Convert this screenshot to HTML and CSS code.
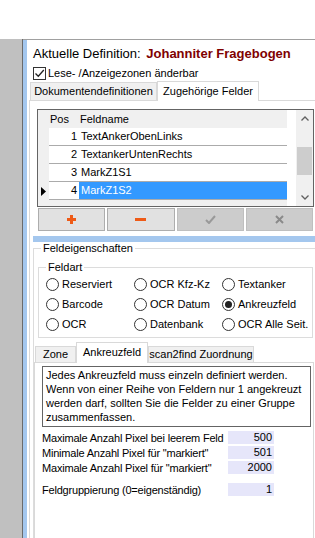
FILE: index.html
```html
<!DOCTYPE html>
<html lang="de">
<head>
    <meta charset="UTF-8">
    <title>Felddefinitionen</title>
    <link rel="stylesheet" href="styles.css">
</head>
<body>

    <div class="topspace"></div>

    <div class="frame">
        <div class="side"></div>
        <div class="stripe"></div>

        <div class="main">
            <div class="title">Aktuelle Definition: <b>Johanniter Fragebogen</b></div>

            <label class="check">
                <span class="box"><svg width="11" height="11" viewBox="0 0 11 11"><path d="M1.5 5.5l2.8 2.8 5.5-6.3" stroke="#222" stroke-width="1.3" fill="none"/></svg></span>
                Lese- /Anzeigezonen änderbar
            </label>

            <div class="tabs outer">
                <div class="tabstrip">
                    <div class="tab t-dok">Dokumentendefinitionen</div>
                    <div class="tab active t-felder">Zugehörige Felder</div>
                </div>
                <div class="tabpage">

                    <div class="grid">
                        <div class="table">
                            <div class="row head">
                                <div></div><div class="pos">Pos</div><div class="name">Feldname</div>
                            </div>
                            <div class="row">
                                <div class="ind"></div><div class="cell num">1</div><div class="cell">TextAnkerObenLinks</div>
                            </div>
                            <div class="row">
                                <div class="ind"></div><div class="cell num">2</div><div class="cell">TextankerUntenRechts</div>
                            </div>
                            <div class="row">
                                <div class="ind"></div><div class="cell num">3</div><div class="cell">MarkZ1S1</div>
                            </div>
                            <div class="row">
                                <div class="ind"><svg width="5" height="9" viewBox="0 0 5 9"><path d="M0 0l5 4.5L0 9z" fill="#000"/></svg></div>
                                <div class="cell num">4</div><div class="cell selected">MarkZ1S2</div>
                            </div>
                        </div>
                        <div class="gap"></div>
                        <div class="scroll">
                            <div class="arrow"><svg width="8" height="5" viewBox="0 0 8 5"><path d="M0.5 4.5L4 1l3.5 3.5" stroke="#606060" stroke-width="1.3" fill="none"/></svg></div>
                            <div class="track"><div class="thumb"></div></div>
                            <div class="arrow"><svg width="8" height="5" viewBox="0 0 8 5"><path d="M0.5 0.5L4 4l3.5-3.5" stroke="#606060" stroke-width="1.3" fill="none"/></svg></div>
                        </div>
                    </div>

                    <div class="buttons">
                        <div class="btn"><svg width="9" height="9" viewBox="0 0 9 9"><path d="M3 0h3v3h3v3H6v3H3V6H0V3h3z" fill="#ee5a16"/></svg></div>
                        <div class="btn"><svg width="11" height="3" viewBox="0 0 11 3"><rect width="11" height="3" fill="#ee5a16"/></svg></div>
                        <div class="btn off"><svg width="11" height="9" viewBox="0 0 11 9"><path d="M1 5l3 3 6-7" stroke="#999" stroke-width="2" fill="none"/></svg></div>
                        <div class="btn off"><svg width="9" height="9" viewBox="0 0 9 9"><path d="M1 1l7 7M8 1L1 8" stroke="#8a8a8a" stroke-width="2"/></svg></div>
                    </div>

                    <div class="bluebar"></div>

                    <fieldset class="group props">
                        <legend>Feldeigenschaften</legend>

                        <fieldset class="group feldart">
                            <legend>Feldart</legend>
                            <div class="radios">
                                <label class="radio"><span class="dot"></span>Reserviert</label>
                                <label class="radio"><span class="dot"></span>OCR Kfz-Kz</label>
                                <label class="radio"><span class="dot"></span>Textanker</label>
                                <label class="radio"><span class="dot"></span>Barcode</label>
                                <label class="radio"><span class="dot"></span>OCR Datum</label>
                                <label class="radio"><span class="dot on"></span>Ankreuzfeld</label>
                                <label class="radio"><span class="dot"></span>OCR</label>
                                <label class="radio"><span class="dot"></span>Datenbank</label>
                                <label class="radio"><span class="dot"></span>OCR Alle Seit.</label>
                            </div>
                        </fieldset>

                        <div class="tabs inner">
                            <div class="tabstrip">
                                <div class="tab t-zone">Zone</div>
                                <div class="tab active t-ank">Ankreuzfeld</div>
                                <div class="tab t-scan">scan2find Zuordnung</div>
                            </div>
                            <div class="tabpage">
                                <div class="info">
                                    Jedes Ankreuzfeld muss einzeln definiert werden.<br>
                                    Wenn von einer Reihe von Feldern nur 1 angekreuzt<br>
                                    werden darf, sollten Sie die Felder zu einer Gruppe<br>
                                    zusammenfassen.
                                </div>

                                <div class="fields">
                                    <div class="field"><span>Maximale Anzahl Pixel bei leerem Feld</span><span class="val">500</span></div>
                                    <div class="field"><span>Minimale Anzahl Pixel für "markiert"</span><span class="val">501</span></div>
                                    <div class="field"><span>Maximale Anzahl Pixel für "markiert"</span><span class="val">2000</span></div>
                                    <div class="field sep"><span>Feldgruppierung (0=eigenständig)</span><span class="val">1</span></div>
                                </div>
                            </div>
                        </div>
                    </fieldset>

                </div>
            </div>
        </div>
    </div>

</body>
</html>
```

FILE: styles.css
```css
/* Fenster im Stil eines Windows-Formulars */
html, body {
    margin: 0;
    padding: 0;
}

body {
    width: 315px;
    height: 538px;
    overflow: hidden;
    background: #fff;
    font-family: "Liberation Sans", Arial, sans-serif;
    font-size: 11px;
    line-height: 14px;
    color: #000;
}

.topspace {
    height: 39px;
}

.frame {
    display: flex;
    height: 499px;
}

.side {
    width: 22px;
    background: #c0c0c0;
    border-right: 1px solid #6b6b6b;
}

.stripe {
    width: 4px;
    background: #a4c7ee;
    border-top: 1px solid #a0a0a0;
}

.main {
    flex: 1;
    min-width: 0;
    overflow: hidden;
    border-top: 1px solid #a0a0a0;
}

.title {
    margin: 6px 0 0 6px;
    font-size: 13px;
    line-height: 16px;
    white-space: nowrap;
}

.title b {
    color: #800000;
    margin-left: 2px;
}

.check {
    display: flex;
    align-items: center;
    height: 14px;
    margin: 4px 0 0 6px;
    white-space: nowrap;
}

.box {
    width: 11px;
    height: 11px;
    border: 1px solid #333;
    background: #fff;
    margin-right: 2px;
    display: flex;
}

/* Registerkarten */
.tabstrip {
    display: flex;
    align-items: flex-end;
    padding-left: 1px;
}

.tab {
    box-sizing: border-box;
    border: 1px solid #d9d9d9;
    border-bottom: none;
    background: #f0f0f0;
    font-size: 11px;
    text-align: center;
    white-space: nowrap;
}

.tab.active {
    background: #fff;
    margin-bottom: -1px;
    position: relative;
}

.tabpage {
    border: 1px solid #d9d9d9;
    background: #fff;
}

.outer {
    width: 300px;
    margin: 1px 0 0 2px;
}

.outer .tabstrip { height: 19px; }
.outer .tab { height: 18px; line-height: 16px; }
.outer .tab.active { height: 20px; line-height: 18px; }
.t-dok { width: 127px; }
.t-felder { width: 102px; }

.outer > .tabpage { height: 460px; }

/* Tabelle */
.grid {
    display: flex;
    width: 275px;
    height: 96px;
    margin: 8px 0 0 7px;
    border: 1px solid #646464;
}

.table {
    width: 249px;
    background: #f0f0f0;
}

.row {
    display: grid;
    grid-template-columns: 11px 30px 208px;
    height: 18px;
}

.row.head div {
    line-height: 18px;
}

.pos { padding-left: 1px; }
.name { padding-left: 1px; }

.ind {
    display: flex;
    align-items: center;
    justify-content: center;
}

.cell {
    background: #fff;
    border-bottom: 1px solid #ababab;
    line-height: 17px;
    padding-left: 2px;
    white-space: nowrap;
}

.cell.num {
    text-align: right;
    padding: 0 2px 0 0;
}

.cell.selected {
    background: #3399ff;
    color: #fff;
}

.gap {
    width: 9px;
    background: #fff;
}

.scroll {
    width: 17px;
    display: flex;
    flex-direction: column;
    background: #f0f0f0;
}

.arrow {
    height: 17px;
    display: flex;
    align-items: center;
    justify-content: center;
}

.track { flex: 1; }

.thumb {
    height: 28px;
    margin: 20px 1px 0;
    background: #cdcdcd;
}

/* Schaltflaechen */
.buttons {
    display: flex;
    gap: 2px;
    width: 275px;
    margin: 1px 0 0 8px;
}

.btn {
    flex: 1;
    height: 23px;
    box-sizing: border-box;
    border: 1px solid #adadad;
    background: #e1e1e1;
    display: flex;
    align-items: center;
    justify-content: center;
}

.btn.off {
    background: #cccccc;
    border-color: #bfbfbf;
}

.bluebar {
    height: 6px;
    margin: 5px 0 0 3px;
    background: #a4c7ee;
}

/* Gruppen */
.group {
    border: 1px solid #dcdcdc;
    padding: 0;
    margin: 0;
    min-width: 0;
}

.group legend {
    padding: 0 2px;
    line-height: 12px;
}

.props {
    margin-left: 3px;
    height: 320px;
}

.props > legend {
    margin-left: 7px;
}

.feldart {
    box-sizing: border-box;
    width: 275px;
    margin: 7px 0 0 4px;
    padding: 1px 0 3px 7px;
}

.radios {
    display: grid;
    grid-template-columns: 88px 88px 1fr;
    grid-auto-rows: 20px;
}

.radio {
    display: flex;
    align-items: center;
    white-space: nowrap;
}

.dot {
    width: 11px;
    height: 11px;
    border: 1px solid #333;
    border-radius: 50%;
    background: #fff;
    margin-right: 3px;
    display: flex;
    align-items: center;
    justify-content: center;
}

.dot.on::after {
    content: "";
    width: 7px;
    height: 7px;
    border-radius: 50%;
    background: #222;
}

.inner {
    width: 280px;
    margin-top: 4px;
}

.inner .tabstrip { height: 20px; }
.inner .tab { height: 16px; line-height: 15px; }
.inner .tab.active { height: 21px; line-height: 19px; }
.t-zone { width: 41px; }
.t-ank { width: 72px; }
.t-scan { width: 106px; }

.inner > .tabpage { height: 200px; }

.info {
    margin: 3px 2px 0 7px;
    padding: 1px 4px 2px 3px;
    border: 1px solid #646464;
    white-space: nowrap;
}

.fields {
    margin: 3px 0 0 7px;
}

.field {
    display: grid;
    grid-template-columns: 186px 46px;
    align-items: center;
    height: 15px;
    white-space: nowrap;
    letter-spacing: -0.2px;
}

.field.sep {
    margin-top: 7px;
}

.val {
    height: 13px;
    line-height: 13px;
    background: #e6e6fa;
    text-align: right;
    padding-right: 2px;
    letter-spacing: 0;
}
```
